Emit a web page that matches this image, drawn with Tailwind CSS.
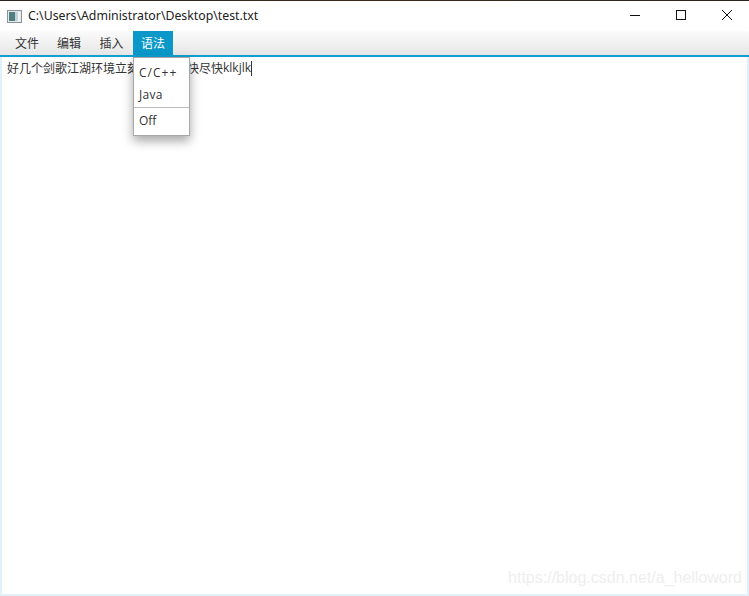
<!DOCTYPE html>
<html>
<head>
<meta charset="utf-8">
<script src="https://cdn.jsdelivr.net/npm/@tailwindcss/browser@4"></script>
</head>
<body class="w-[749px] h-[596px] overflow-hidden bg-white font-['Open_Sans','Noto_Sans_CJK_SC',sans-serif] text-[#333]">
<div class="h-[1px] bg-gradient-to-r from-[#2a2420] via-[#3a2a1c] to-[#2a2420]"></div>
<div class="h-[30px] flex items-center relative">
  <svg class="ml-[7px] mr-[6px]" width="15" height="13" viewBox="0 0 15 13">
    <rect x="0.5" y="0.5" width="14" height="12" fill="#e8eaea" stroke="#8a9396"/>
    <rect x="2" y="2" width="6" height="9" fill="#4f7f80"/>
    <rect x="8" y="2" width="3" height="9" fill="#c4d4d6"/>
    <rect x="11" y="2" width="2" height="9" fill="#f2f4f4"/>
  </svg>
  <span class="text-[12.3px] leading-none font-['Noto_Sans'] text-[#222]">C:\Users\Administrator\Desktop\test.txt</span>
  <div class="absolute right-0 top-0 h-[30px] flex items-center">
    <svg width="46" height="30" viewBox="0 0 46 30"><path d="M19 14.5h10" stroke="#111" fill="none"/></svg>
    <svg width="46" height="30" viewBox="0 0 46 30"><rect x="19.5" y="9.5" width="9" height="9" stroke="#111" fill="none"/></svg>
    <svg width="46" height="30" viewBox="0 0 46 30"><path d="M19 9l10 10M29 9l-10 10" stroke="#111" fill="none"/></svg>
  </div>
</div>
<div class="h-[24px] bg-gradient-to-b from-[#fbfbfb] to-[#e6e6e6] flex pl-[6px] text-[12px] font-['Noto_Sans_CJK_SC'] text-[#333]">
  <div class="w-[42px] flex items-center justify-center">文件</div>
  <div class="w-[42px] flex items-center justify-center">编辑</div>
  <div class="w-[43px] flex items-center justify-center">插入</div>
  <div class="w-[40px] flex items-center justify-center bg-[#0b98c9] text-white">语法</div>
</div>
<div class="h-[2px] bg-[#0f9fd3]"></div>
<div class="relative h-[539px] border-l-[2px] border-r-[2px] border-b-[2px] border-[#dff2fb] bg-white">
  <div class="pl-[5px] pt-[2px] h-[20px] flex items-center text-[12px] text-[#333]">
    <span class="font-['Noto_Sans_CJK_SC']">好几个剑歌江湖环境立刻就会去赶快尽快</span><span class="text-[12px]">klkjlk</span><span class="w-[1px] h-[15px] bg-[#333]"></span>
  </div>
  <div class="absolute left-[131px] top-[0px] w-[57px] h-[79px] bg-white border border-[#a8a8a8] shadow-[0_5px_10px_rgba(0,0,0,0.35)] text-[12px] pt-[3px]">
    <div class="h-[23px] pl-[5px] flex items-center tracking-[1px]">C/C++</div>
    <div class="h-[23px] pl-[5px] pb-[2px] flex items-center tracking-[0.3px]">Java</div>
    <div class="h-[1px] bg-[#bdbdbd]"></div>
    <div class="h-[25px] pl-[5px] flex items-center">Off</div>
  </div>
  <div class="absolute right-[5px] bottom-[8px] text-[16px] leading-none font-['Liberation_Sans'] text-[#eeeeee]">https://blog.csdn.net/a_helloword</div>
</div>
</body>
</html>
